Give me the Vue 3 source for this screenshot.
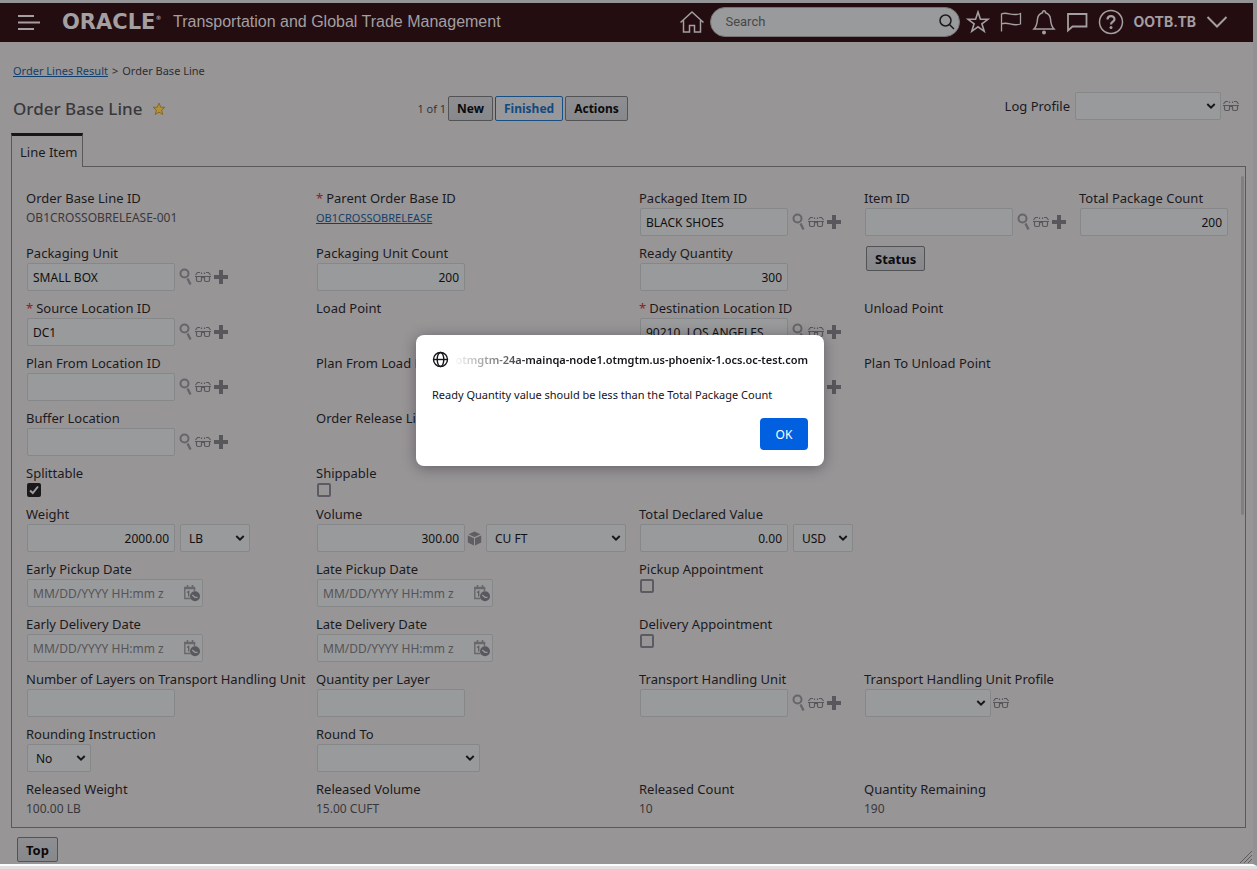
<script setup>
import { ref, h } from 'vue'

const svg = (cls, w, hgt, kids) =>
  h('svg', { class: cls, width: w, height: hgt, viewBox: `0 0 ${w} ${hgt}`, fill: 'none', 'aria-hidden': 'true' }, kids)

const GlassesIcon = () =>
  svg('', 16, 12, [
    h('path', { d: 'M0 5.500H16M1.500 5.500V9Q1.500 10.500 3 10.500H5Q6.500 10.500 6.500 9V5.500M9.500 5.500V9Q9.500 10.500 11 10.500H13Q14.500 10.500 14.500 9V5.500M6.500 6.500H9.500M0.500 4L2.500 1.500H5M6.500 1.500V3M15.500 4L13.500 1.500H11M9.500 1.500V3', stroke: '#58575c', 'stroke-width': 1.2 }),
  ])
const SearchIcon = () =>
  svg('', 13, 18, [
    h('circle', { cx: 5.5, cy: 5.5, r: 4, stroke: '#66656a', 'stroke-width': 2 }),
    h('path', { d: 'M8.500 10.500L11.500 16.500', stroke: '#66656a', 'stroke-width': 2.4 }),
  ])
const PlusIcon = () => svg('', 14, 14, [h('path', { d: 'M7 0V14M0 7H14', stroke: '#58575b', 'stroke-width': 4 })])
const CubeIcon = () =>
  svg('', 15, 15, [
    h('path', { d: 'M7.500 0.500L13.500 3.200L7.500 6L1.500 3.200ZM0.800 4.500L7 7.300V14.500L0.800 11.500ZM14.200 4.500L8 7.300V14.500L14.200 11.500Z', fill: '#5f5e63' }),
  ])
const CalendarIcon = () =>
  svg('', 18, 17, [
    h('path', { d: 'M0.800 3V13.500H6.500M10.500 3V6', stroke: '#68676c', 'stroke-width': 1.4 }),
    h('path', { d: 'M0 3H11.200', stroke: '#68676c', 'stroke-width': 2.4 }),
    h('path', { d: 'M3.500 0V4M8.500 0V4', stroke: '#68676c', 'stroke-width': 1.6 }),
    h('path', { d: 'M3 7.500L4.700 6.500V11.500', stroke: '#5f5e63', 'stroke-width': 1.300 }),
    h('circle', { cx: 11, cy: 11.300, r: 5, fill: '#59585e' }),
    h('path', { d: 'M8.300 10L11 12.300H13.500', stroke: '#999a9b', 'stroke-width': 1.300 }),
  ])
const ChevronIcon = () =>
  svg('chevron', 10, 8, [h('path', { d: 'M1.300 2L5 5.700L8.700 2', stroke: '#161517', 'stroke-width': 1.9 })])

const fields = ref([
  { id: 'line-id', label: 'Order Base Line ID', col: 1, row: 1, type: 'value', value: 'OB1CROSSOBRELEASE-001' },
  { id: 'parent', label: 'Parent Order Base ID', req: true, col: 2, row: 1, type: 'link', value: 'OB1CROSSOBRELEASE' },
  { id: 'packaged', label: 'Packaged Item ID', col: 3, row: 1, type: 'lookup', value: 'BLACK SHOES' },
  { id: 'item', label: 'Item ID', col: 4, row: 1, type: 'lookup', value: '' },
  { id: 'total', label: 'Total Package Count', col: 5, row: 1, type: 'number', value: '200' },
  { id: 'unit', label: 'Packaging Unit', col: 1, row: 2, type: 'lookup', value: 'SMALL BOX' },
  { id: 'unit-count', label: 'Packaging Unit Count', col: 2, row: 2, type: 'number', value: '200' },
  { id: 'ready', label: 'Ready Quantity', col: 3, row: 2, type: 'number', value: '300' },
  { id: 'status', col: 4, row: 2, type: 'button', value: 'Status' },
  { id: 'source', label: 'Source Location ID', req: true, col: 1, row: 3, type: 'lookup', value: 'DC1' },
  { id: 'load', label: 'Load Point', col: 2, row: 3, type: 'empty' },
  { id: 'dest', label: 'Destination Location ID', req: true, col: 3, row: 3, type: 'lookup', value: '90210, LOS ANGELES' },
  { id: 'unload', label: 'Unload Point', col: 4, row: 3, type: 'empty' },
  { id: 'plan-from', label: 'Plan From Location ID', col: 1, row: 4, type: 'lookup', value: '' },
  { id: 'plan-load', label: 'Plan From Load Point', col: 2, row: 4, type: 'empty' },
  { id: 'plan-to', label: 'Plan To Location ID', col: 3, row: 4, type: 'lookup', value: '' },
  { id: 'plan-unload', label: 'Plan To Unload Point', col: 4, row: 4, type: 'empty' },
  { id: 'buffer', label: 'Buffer Location', col: 1, row: 5, type: 'lookup', value: '' },
  { id: 'release-line', label: 'Order Release Line ID', col: 2, row: 5, type: 'empty' },
  { id: 'split', label: 'Splittable', col: 1, row: 6, type: 'check', value: true },
  { id: 'ship', label: 'Shippable', col: 2, row: 6, type: 'check', value: false },
  { id: 'weight', label: 'Weight', col: 1, row: 7, type: 'number', value: '2000.00', unit: 'LB', size: 'w70' },
  { id: 'volume', label: 'Volume', col: 2, row: 7, type: 'number', value: '300.00', cube: true, unit: 'CU FT', size: 'w140' },
  { id: 'declared', label: 'Total Declared Value', col: 3, row: 7, type: 'number', value: '0.00', unit: 'USD', size: 'w60' },
  { id: 'early-pickup', label: 'Early Pickup Date', col: 1, row: 8, type: 'date', value: '' },
  { id: 'late-pickup', label: 'Late Pickup Date', col: 2, row: 8, type: 'date', value: '' },
  { id: 'pickup-appt', label: 'Pickup Appointment', col: 3, row: 8, type: 'check', value: false },
  { id: 'early-delivery', label: 'Early Delivery Date', col: 1, row: 9, type: 'date', value: '' },
  { id: 'late-delivery', label: 'Late Delivery Date', col: 2, row: 9, type: 'date', value: '' },
  { id: 'delivery-appt', label: 'Delivery Appointment', col: 3, row: 9, type: 'check', value: false },
  { id: 'layers', label: 'Number of Layers on Transport Handling Unit', col: 1, row: 10, type: 'text', value: '' },
  { id: 'per-layer', label: 'Quantity per Layer', col: 2, row: 10, type: 'text', value: '' },
  { id: 'thu', label: 'Transport Handling Unit', col: 3, row: 10, type: 'lookup', value: '' },
  { id: 'thu-profile', label: 'Transport Handling Unit Profile', col: 4, row: 10, type: 'select', value: '', size: 'w126', glasses: true },
  { id: 'rounding', label: 'Rounding Instruction', col: 1, row: 11, type: 'select', value: 'No', size: 'w64' },
  { id: 'round-to', label: 'Round To', col: 2, row: 11, type: 'select', value: '', size: 'w163' },
  { id: 'rel-weight', label: 'Released Weight', col: 1, row: 12, type: 'value', value: '100.00 LB' },
  { id: 'rel-volume', label: 'Released Volume', col: 2, row: 12, type: 'value', value: '15.00 CUFT' },
  { id: 'rel-count', label: 'Released Count', col: 3, row: 12, type: 'value', value: '10' },
  { id: 'remaining', label: 'Quantity Remaining', col: 4, row: 12, type: 'value', value: '190' },
])
const hasControl = (f) => !['value', 'link', 'empty', 'button'].includes(f.type)
const search = ref('')
const logProfile = ref('')
</script>

<template>
  <div class="window">
    <div class="page">
      <header class="topbar">
        <button class="icon-btn menu" aria-label="Menu">
          <svg width="24" height="16" viewBox="0 0 24 16" stroke="#a49fa0" stroke-width="2"><path d="M1 2H17M1 8.500H23M1 15H17" /></svg>
        </button>
        <div class="brand">ORACLE<span class="reg">®</span></div>
        <div class="product">Transportation and Global Trade Management</div>
        <nav class="tools">
          <button class="icon-btn home" aria-label="Home">
            <svg width="26" height="24" viewBox="0 0 26 24" fill="none" stroke="#a49fa0" stroke-width="1.5"><path d="M1.500 12.500L13 2L24.500 12.500M4.500 10.500V22H10.500V15.500H15.500V22H21.500V10.500" /></svg>
          </button>
          <label class="search">
            <input v-model="search" type="text" placeholder="Search" aria-label="Search" />
            <svg width="16" height="16" viewBox="0 0 16 16" fill="none" stroke="#1b191b" stroke-width="1.5"><circle cx="6.500" cy="6.500" r="5.500" /><path d="M10.500 10.500L15 15" /></svg>
          </label>
          <button class="icon-btn" aria-label="Favorites">
            <svg width="24" height="24" viewBox="0 0 24 24" fill="none" stroke="#a49fa0" stroke-width="1.600"><path d="M12 2L14.400 9.300H22L15.900 13.800L18.200 21.300L12 16.800L5.800 21.300L8.100 13.800L2 9.300H9.600Z" /></svg>
          </button>
          <button class="icon-btn" aria-label="Flags">
            <svg width="24" height="24" viewBox="0 0 24 24" fill="none" stroke="#a49fa0" stroke-width="1.300"><path d="M2.500 21.500V4C8 1 13 7 21.500 3.500V14C13 17 9 11 2.500 14" /></svg>
          </button>
          <button class="icon-btn" aria-label="Notifications">
            <svg width="24" height="26" viewBox="0 0 24 26" fill="none" stroke="#a49fa0" stroke-width="1.500"><path d="M2 20C5 17 5 15 5.500 10C6 6 8 4.500 10.500 3.800C10.500 1 13.500 1 13.500 3.800C16 4.500 18 6 18.500 10C19 15 19 17 22 20Z" /><circle cx="12" cy="23.500" r="2" fill="#a49fa0" stroke="none" /></svg>
          </button>
          <button class="icon-btn" aria-label="Messages">
            <svg width="24" height="24" viewBox="0 0 24 24" fill="none" stroke="#a49fa0" stroke-width="1.800"><path d="M3 4H21.500V16.500H7.500L3 20.500Z" /></svg>
          </button>
          <button class="icon-btn" aria-label="Help">
            <svg width="26" height="26" viewBox="0 0 26 26" fill="none" stroke="#a49fa0"><circle cx="13" cy="13" r="11.500" stroke-width="1.500" /><path d="M9.500 10.500C9.500 6 16.500 6 16.500 10.200C16.500 12.500 13 12.800 13 15.500" stroke-width="2.200" /><circle cx="13" cy="18.500" r="1.500" fill="#a49fa0" stroke="none" /></svg>
          </button>
          <button class="user">
            OOTB.TB
            <svg width="22" height="14" viewBox="0 0 22 14" fill="none" stroke="#a49fa0" stroke-width="2"><path d="M1.500 2L11 11.500L20.500 2" /></svg>
          </button>
        </nav>
      </header>

      <main>
        <nav class="crumbs"><a href="#">Order Lines Result</a><span>&gt;</span><span>Order Base Line</span></nav>

        <div class="heading">
          <div class="title">
            <h1>Order Base Line</h1>
            <svg width="14" height="14" viewBox="0 0 14 14"><path d="M7 1L8.700 5.200L13 5.300L9.600 8.200L10.800 12.600L7 10.200L3.200 12.600L4.400 8.200L1 5.300L5.300 5.200Z" fill="#b39132" stroke="#86692a" stroke-width="1" /></svg>
          </div>
          <div class="actions">
            <span class="count">1 of 1</span>
            <button class="btn">New</button>
            <button class="btn primary">Finished</button>
            <button class="btn">Actions</button>
          </div>
          <div class="log">
            <label for="log-profile">Log Profile</label>
            <span class="select w146">
              <select id="log-profile" v-model="logProfile"><option value=""></option></select>
              <ChevronIcon />
            </span>
            <GlassesIcon class="after-select" />
          </div>
        </div>

        <div class="tabs"><button class="tab">Line Item</button></div>
        <section class="panel">
          <div class="thumb"></div>
          <div class="grid">
            <div v-for="f in fields" :key="f.id" class="field" :class="['c' + f.col, 'r' + f.row]">
              <component :is="hasControl(f) ? 'label' : 'div'" v-if="f.label" class="label" :for="hasControl(f) ? f.id : undefined">
                <span v-if="f.req" class="req">*</span>{{ f.label }}
              </component>

              <div v-if="f.type === 'value'" class="value">{{ f.value }}</div>
              <a v-else-if="f.type === 'link'" class="value link" href="#">{{ f.value }}</a>
              <button v-else-if="f.type === 'button'" class="btn status">{{ f.value }}</button>
              <span v-else-if="f.type === 'check'" class="check">
                <input :id="f.id" v-model="f.value" type="checkbox" />
                <svg v-if="f.value" width="14" height="14" viewBox="0 0 14 14" fill="none" stroke="#a09ea0" stroke-width="2"><path d="M3 7.500L5.800 10L11 3.500" /></svg>
              </span>
              <span v-else-if="f.type === 'date'" class="date box">
                <input :id="f.id" v-model="f.value" type="text" placeholder="MM/DD/YYYY HH:mm z" />
                <CalendarIcon />
              </span>
              <div v-else-if="f.type === 'select'" class="control">
                <span class="select" :class="f.size">
                  <select :id="f.id"><option>{{ f.value }}</option></select>
                  <ChevronIcon />
                </span>
                <GlassesIcon v-if="f.glasses" class="after-select" />
              </div>
              <div v-else-if="f.type !== 'empty'" class="control">
                <input :id="f.id" v-model="f.value" class="box input" :class="{ num: f.type === 'number' }" type="text" />
                <span v-if="f.type === 'lookup'" class="lookup"><SearchIcon /><GlassesIcon /><PlusIcon /></span>
                <CubeIcon v-if="f.cube" class="cube" />
                <span v-if="f.unit" class="select unit" :class="[f.size, { tight: f.cube }]">
                  <select :aria-label="f.label + ' unit'"><option>{{ f.unit }}</option></select>
                  <ChevronIcon />
                </span>
              </div>
            </div>
          </div>
        </section>
        <footer class="foot">
          <button class="btn">Top</button>
          <svg class="grip" width="14" height="14" viewBox="0 0 14 14" stroke="#5d5b5e" stroke-width="1"><path d="M1 13L13 1M5 13L13 5M9 13L13 9" /></svg>
        </footer>
      </main>
    </div>

    <div class="overlay">
      <div class="dialog" role="alertdialog" aria-labelledby="dialog-host" aria-describedby="dialog-text">
        <div class="origin">
          <svg width="17" height="17" viewBox="0 0 17 17" fill="none" stroke="#15141a" stroke-width="1.400"><circle cx="8.500" cy="8.500" r="7" /><ellipse cx="8.500" cy="8.500" rx="3.300" ry="7" /><path d="M1.500 8.500H15.500" /></svg>
          <div id="dialog-host" class="host"><span>otmgtm-24a-mainqa-node1.otmgtm.us-phoenix-1.ocs.oc-test.com</span></div>
        </div>
        <p id="dialog-text">Ready Quantity value should be less than the Total Package Count</p>
        <button class="ok">OK</button>
      </div>
    </div>
  </div>
</template>

<style>
body {
  margin: 0;
  background: #e0e0e0;
}
</style>

<style scoped>
* {
  box-sizing: border-box;
}
svg {
  display: block;
  flex: none;
}
button,
input,
select {
  font-family: inherit;
  margin: 0;
}
.window {
  position: relative;
  min-height: 100vh;
  padding-bottom: 3px;
  font-family: 'Noto Sans', sans-serif;
  font-size: 12px;
  color: #1b1a1c;
  display: flex;
  flex-direction: column;
}
.page {
  flex: 1;
  background: #989597;
  border-top: 3px solid #949395;
  border-right: 4px solid #919092;
  border-bottom: 2px solid #fbfdfd;
}
.topbar {
  height: 39px;
  padding: 0 25px 2px 17px;
  background: #230d11;
  color: #a49fa0;
  display: flex;
  align-items: center;
}
.icon-btn {
  background: none;
  border: 0;
  padding: 0;
}
.brand {
  display: flex;
  width: 111px;
  margin-left: 21px;
  font: bold 21px/24px 'DejaVu Sans', sans-serif;
}
.reg {
  font-size: 6px;
  line-height: 16px;
}
.product {
  flex: 1;
  font: 16px/20px 'Liberation Sans', Arial, sans-serif;
  white-space: nowrap;
}
.tools {
  display: flex;
  align-items: center;
  gap: 9px;
}
.home {
  margin-right: -4px;
}
.search {
  display: flex;
  align-items: center;
  width: 250px;
  height: 30px;
  padding: 0 4px 0 14px;
  border: 1px solid #777274;
  border-radius: 15px;
  background: #999a9b;
  margin-right: -3px;
}
.search input {
  flex: 1;
  min-width: 0;
  padding: 0;
  border: 0;
  background: none;
  font-family: Roboto, sans-serif;
  font-size: 13px;
}
.search input::placeholder {
  color: #48474a;
  opacity: 1;
}
.user {
  display: flex;
  align-items: center;
  gap: 10px;
  padding: 0;
  border: 0;
  background: none;
  color: #a49fa0;
  font: bold 14px/20px Inter, sans-serif;
}
main {
  padding: 21px 7px 0 11px;
}
.crumbs {
  display: flex;
  gap: 4px;
  padding-left: 2px;
  font-size: 11px;
  line-height: 16px;
  color: #2e2d30;
}
a {
  color: #123f6b;
  text-decoration: underline;
}
.heading {
  display: grid;
  grid-template-columns: minmax(0, 405fr) minmax(0, 588fr) auto;
  align-items: start;
  height: 28px;
  margin-top: 13px;
  padding: 0 7px 0 2px;
}
.title,
.actions,
.log {
  display: flex;
  align-items: center;
}
.title {
  gap: 10px;
  padding-top: 5px;
}
h1 {
  margin: 0;
  font-size: 17px;
  line-height: 24px;
  font-weight: 500;
  color: #39383b;
}
.actions {
  gap: 2px;
  padding-top: 4px;
}
.count {
  color: #2e2d30;
  font: 11px/16px 'Open Sans', sans-serif;
}
.btn {
  height: 25px;
  padding: 0 8px;
  border: 1px solid #535255;
  border-radius: 2px;
  background: linear-gradient(#8f8f93, #86888c);
  color: #0b0a0c;
  font-size: 13px;
  line-height: 20px;
  font-weight: 700;
}
.actions .btn {
  font-size: 12px;
}
.actions .primary {
  background: #98979a;
  border-color: #154f85;
  color: #124a80;
}
.log label {
  margin-right: 5px;
  font-size: 13px;
}
.tabs {
  display: flex;
  margin-top: 13px;
}
.tab {
  position: relative;
  z-index: 1;
  height: 34px;
  margin-bottom: -1px;
  padding: 0 4px 0 8px;
  border: 1px solid #5a585b;
  border-top: 3px solid #161517;
  border-bottom: 0;
  background: #989597;
  color: #1b1a1c;
  font-size: 13px;
}
.panel {
  position: relative;
  border: 1px solid #5a585b;
  padding: 22px 3px 8px 14px;
}
.thumb {
  position: absolute;
  top: 9px;
  right: 1px;
  width: 3px;
  height: 339px;
  border-radius: 2px;
  background: #808082;
}
.grid {
  display: grid;
  grid-template-columns: minmax(0, 290fr) minmax(0, 323fr) minmax(0, 225fr) minmax(0, 215fr) minmax(0, 163fr);
  row-gap: 8px;
}
.c1 { grid-column: 1; }
.c2 { grid-column: 2; }
.c3 { grid-column: 3; }
.c4 { grid-column: 4; }
.c5 { grid-column: 5; }
.r1 { grid-row: 1; }
.r2 { grid-row: 2; }
.r3 { grid-row: 3; }
.r4 { grid-row: 4; }
.r5 { grid-row: 5; }
.r6 { grid-row: 6; }
.r7 { grid-row: 7; }
.r8 { grid-row: 8; }
.r9 { grid-row: 9; }
.r10 { grid-row: 10; }
.r11 { grid-row: 11; }
.r12 { grid-row: 12; }
.label {
  display: block;
  margin-bottom: 1px;
  font-size: 13px;
  line-height: 18px;
  white-space: nowrap;
}
.req {
  margin-right: 3px;
  color: #8c1d22;
}
.value {
  display: block;
  line-height: 20px;
  color: #39383b;
}
.link {
  color: #123f6b;
  font-size: 11px;
}
.control {
  display: flex;
  align-items: center;
  padding-left: 1px;
}
.box,
.select select {
  height: 28px;
  border: 1px solid #868788;
  border-radius: 2px;
  background: #999a9b;
  color: #111012;
  font-size: 12px;
}
.input {
  width: 148px;
  padding: 1px 5px 0;
}
.num {
  text-align: right;
}
.lookup {
  display: flex;
  align-items: center;
  gap: 3px;
  margin-left: 4px;
}
.select {
  display: grid;
  align-items: center;
}
.select > * {
  grid-area: 1 / 1;
}
.select select {
  width: 100%;
  padding: 0 8px;
  appearance: none;
}
.chevron {
  justify-self: end;
  margin-right: 5px;
  pointer-events: none;
}
.w60 { width: 60px; }
.w64 { width: 64px; }
.w70 { width: 70px; }
.w126 { width: 126px; }
.w140 { width: 140px; }
.w146 { width: 146px; }
.w163 { width: 163px; }
.unit {
  margin-left: 5px;
}
.tight {
  margin-left: 4px;
}
.cube,
.after-select {
  margin-left: 2px;
}
.status {
  margin: 2px 0 0 2px;
}
.check {
  display: grid;
  width: 14px;
  height: 14px;
  margin-left: 1px;
}
.check > * {
  grid-area: 1 / 1;
}
.check svg {
  pointer-events: none;
}
.check input {
  width: 14px;
  height: 14px;
  appearance: none;
  border: 2px solid #5c5b64;
  border-radius: 2px;
}
.check input:checked {
  background: #19181a;
  border-color: #19181a;
}
.date {
  display: flex;
  align-items: center;
  width: 176px;
  margin-left: 1px;
  padding: 0 0 0 5px;
}
.date input {
  flex: 1;
  min-width: 0;
  padding: 0;
  border: 0;
  background: none;
  font-size: 12px;
}
.date input::placeholder {
  color: #555457;
  opacity: 1;
}
.foot {
  display: flex;
  justify-content: space-between;
  align-items: flex-end;
  height: 36px;
  margin-right: -7px;
  padding: 0 0 0 6px;
}
.foot .btn {
  margin-bottom: 2px;
}
.overlay {
  position: absolute;
  inset: 0;
  display: flex;
  justify-content: center;
  align-items: flex-start;
  padding: 335px 17px 0 0;
}
.dialog {
  width: 408px;
  padding: 16px;
  border-radius: 8px;
  background: #fff;
  box-shadow: 0 2px 14px rgba(20, 18, 24, 0.4);
  color: #15141a;
}
.origin {
  display: flex;
  align-items: center;
  gap: 4px;
  height: 17px;
}
.host {
  flex: 1;
  min-width: 0;
  display: flex;
  justify-content: flex-end;
  overflow: hidden;
  font-size: 11px;
  line-height: 17px;
  font-weight: 600;
  white-space: nowrap;
  mask-image: linear-gradient(to right, transparent, #000 80px);
}
.dialog p {
  margin: 18px 0 15px;
  font-size: 11px;
  line-height: 17px;
  white-space: nowrap;
}
.ok {
  display: block;
  width: 48px;
  height: 32px;
  margin-left: auto;
  border: 0;
  border-radius: 4px;
  background: #0060df;
  color: #fff;
  font-size: 12px;
}
</style>
